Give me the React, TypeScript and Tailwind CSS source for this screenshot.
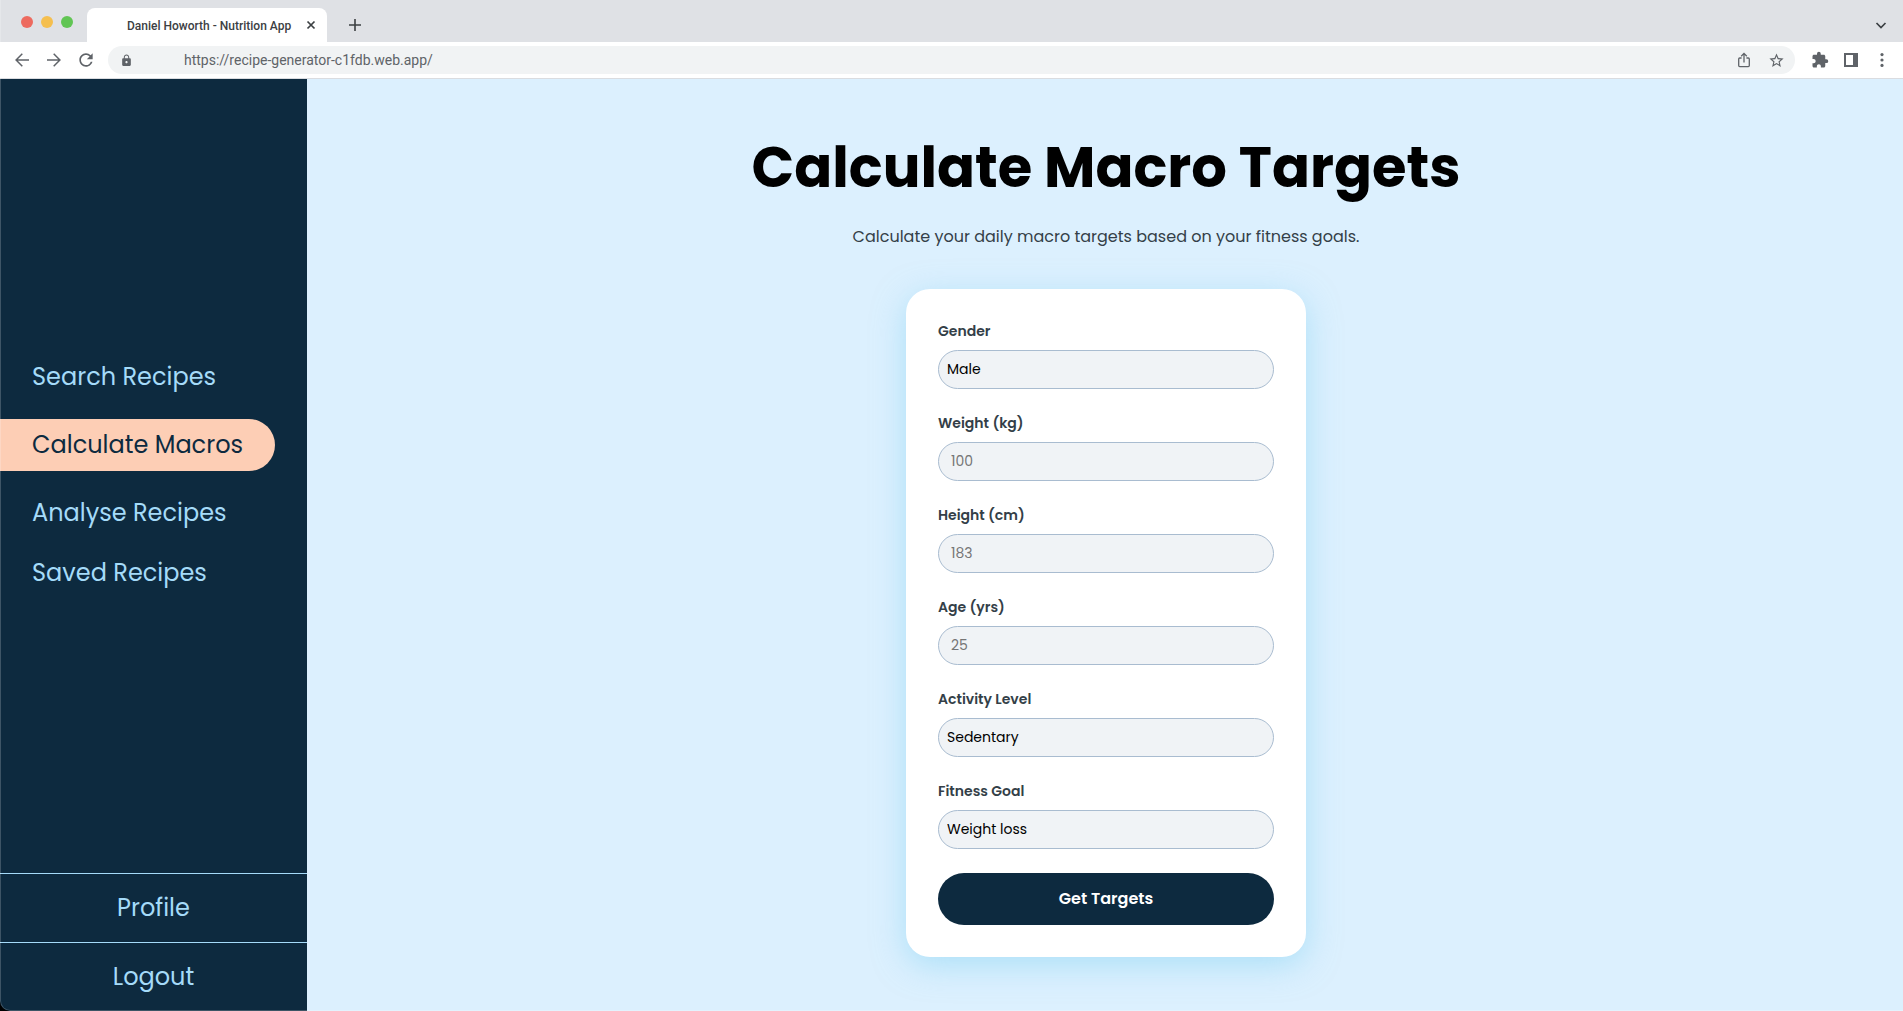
import React from "react";
import { MdExtension, MdLock, MdRefresh, MdStarBorder } from "react-icons/md";

const navItems = [
  { label: "Search Recipes", active: false },
  { label: "Calculate Macros", active: true },
  { label: "Analyse Recipes", active: false },
  { label: "Saved Recipes", active: false },
];

type Field =
  | { id: string; label: string; kind: "select"; options: string[] }
  | { id: string; label: string; kind: "number"; placeholder: string };

const fields: Field[] = [
  { id: "gender", label: "Gender", kind: "select", options: ["Male", "Female"] },
  { id: "weight", label: "Weight (kg)", kind: "number", placeholder: "100" },
  { id: "height", label: "Height (cm)", kind: "number", placeholder: "183" },
  { id: "age", label: "Age (yrs)", kind: "number", placeholder: "25" },
  {
    id: "activity",
    label: "Activity Level",
    kind: "select",
    options: ["Sedentary", "Light", "Moderate", "Active"],
  },
  {
    id: "goal",
    label: "Fitness Goal",
    kind: "select",
    options: ["Weight loss", "Maintenance", "Muscle gain"],
  },
];

function LineIcon({ d, size, width = 1.5 }: { d: string; size: number; width?: number }) {
  return (
    <svg
      width={size}
      height={size}
      viewBox={`0 0 ${size} ${size}`}
      fill="none"
      stroke="currentColor"
      strokeWidth={width}
    >
      <path d={d} />
    </svg>
  );
}

function TabStrip() {
  return (
    <div className="flex h-[42px] items-end bg-[#dfe1e5] pr-[15px] pl-[21px]">
      <div className="mb-3.5 flex items-center gap-2">
        <span className="size-3 rounded-full bg-[#ed6a5f]" />
        <span className="size-3 rounded-full bg-[#f5bf4f]" />
        <span className="size-3 rounded-full bg-[#61c554]" />
      </div>
      <div className="ml-3.5 flex h-[34px] w-60 items-center justify-between rounded-t-lg bg-white pr-2.5 pl-10">
        <span className="pt-0.5 text-xs font-medium text-[#3c4043]">
          Daniel Howorth - Nutrition App
        </span>
        <button type="button" aria-label="Close tab" className="text-[#3c4043]">
          <LineIcon size={12} d="M2.5 2.5l7 7M9.5 2.5l-7 7" width={1.7} />
        </button>
      </div>
      <button type="button" aria-label="New tab" className="mb-2.5 ml-[21px] text-[#3c4043]">
        <LineIcon size={14} d="M7 1v12M1 7h12" width={1.6} />
      </button>
      <button type="button" aria-label="Search tabs" className="mb-2.5 ml-auto text-[#3c4043]">
        <LineIcon size={14} d="M2.5 5L7 9.5 11.5 5" width={1.7} />
      </button>
    </div>
  );
}

function Toolbar() {
  return (
    <div className="flex h-[37px] items-center border-b border-[#dadce0] bg-white px-3 text-[#5f6368]">
      <div className="flex items-center gap-3">
        <button type="button" aria-label="Back">
          <LineIcon size={20} d="M17 10H4.2M10.3 3.8L4.1 10l6.2 6.2" />
        </button>
        <button type="button" aria-label="Forward">
          <LineIcon size={20} d="M3 10h12.8M9.7 3.8l6.2 6.2-6.2 6.2" />
        </button>
        <button type="button" aria-label="Reload">
          <MdRefresh size={20} />
        </button>
      </div>
      <div className="ml-3 flex h-7 flex-1 items-center rounded-full bg-[#f1f3f4] pr-2.5 pl-3">
        <MdLock size={13} />
        <input
          type="text"
          aria-label="Address"
          defaultValue="https://recipe-generator-c1fdb.web.app/"
          className="ml-[51px] min-w-0 flex-1 bg-transparent text-sm text-[#5f6368] outline-none"
        />
        <div className="flex items-center gap-4">
          <button type="button" aria-label="Share">
            <LineIcon
              size={16}
              width={1.3}
              d="M5.6 6H3.7a1 1 0 0 0-1 1v6.6a1 1 0 0 0 1 1h8.6a1 1 0 0 0 1-1V7a1 1 0 0 0-1-1h-1.9M8 10.5V1.5M5.2 4.2L8 1.4l2.8 2.8"
            />
          </button>
          <button type="button" aria-label="Bookmark">
            <MdStarBorder size={17} />
          </button>
        </div>
      </div>
      <div className="ml-4 flex items-center gap-[13px]">
        <button type="button" aria-label="Extensions">
          <MdExtension size={18} />
        </button>
        <button type="button" aria-label="Side panel">
          <svg width="18" height="18" viewBox="0 0 18 18" fill="currentColor">
            <path d="M2 2h14v14H2zM4 4v10h7V4z" fillRule="evenodd" />
          </svg>
        </button>
        <button type="button" aria-label="Menu">
          <svg width="18" height="18" viewBox="0 0 18 18" fill="currentColor">
            <circle cx="9" cy="3.6" r="1.6" />
            <circle cx="9" cy="9" r="1.6" />
            <circle cx="9" cy="14.4" r="1.6" />
          </svg>
        </button>
      </div>
    </div>
  );
}

function Sidebar() {
  return (
    <aside className="flex w-[307px] shrink-0 flex-col bg-[#0d2a3f] text-2xl leading-9 text-[#a5dbf9]">
      <nav className="flex flex-1 flex-col items-start justify-center gap-6 pb-0.5">
        {navItems.map((item) => (
          <a
            key={item.label}
            href="#"
            aria-current={item.active ? "page" : undefined}
            className={
              item.active ? "rounded-r-full bg-[#fdceb5] px-8 py-2 text-[#0d2a3f]" : "px-8"
            }
          >
            {item.label}
          </a>
        ))}
      </nav>
      <a href="#" className="border-t border-[#a5dbf9] py-4 text-center">
        Profile
      </a>
      <a href="#" className="border-t border-[#a5dbf9] py-4 text-center">
        Logout
      </a>
    </aside>
  );
}

function MacroForm() {
  const control =
    "h-[39px] w-full appearance-none rounded-full border border-[#a9bcd0] bg-[#f0f3f6] text-sm outline-none";
  return (
    <form
      className="flex w-[400px] flex-col gap-6 rounded-3xl bg-white p-8 shadow-[0_8px_32px_rgba(125,209,243,0.5)]"
      onSubmit={(e) => e.preventDefault()}
    >
      {fields.map((field) => (
        <div key={field.id} className="flex flex-col gap-2">
          <label htmlFor={field.id} className="text-sm leading-[21px] font-semibold text-[#343f48]">
            {field.label}
          </label>
          {field.kind === "select" ? (
            <select id={field.id} className={`${control} px-2 pb-0.5 text-black`}>
              {field.options.map((o) => (
                <option key={o}>{o}</option>
              ))}
            </select>
          ) : (
            <input
              id={field.id}
              type="text"
              inputMode="numeric"
              placeholder={field.placeholder}
              className={`${control} px-3 placeholder:text-[#757575]`}
            />
          )}
        </div>
      ))}
      <button
        type="submit"
        className="h-[52px] rounded-full bg-[#0d2a3f] text-base font-semibold text-white"
      >
        Get Targets
      </button>
    </form>
  );
}

export default function App() {
  return (
    <div className="min-h-screen bg-black">
      <div className="relative flex min-h-screen flex-col overflow-hidden rounded-bl-[10px]">
        <header className="font-[Roboto,sans-serif]">
          <TabStrip />
          <Toolbar />
        </header>
        <div className="flex flex-1 font-[Poppins,Inter,sans-serif]">
          <Sidebar />
          <main className="flex flex-1 flex-col items-center bg-[#dcf0fe] pt-[50px] pr-8 pb-[54px] pl-[34px]">
            <h1 className="text-[56px] leading-[78px] font-bold text-black">
              Calculate Macro Targets
            </h1>
            <p className="mt-[18px] mb-10 text-base leading-6 text-[#343f48]">
              Calculate your daily macro targets based on your fitness goals.
            </p>
            <MacroForm />
          </main>
        </div>
        <div className="pointer-events-none absolute inset-0 rounded-bl-[10px] border-b border-l border-white/20" />
      </div>
    </div>
  );
}
